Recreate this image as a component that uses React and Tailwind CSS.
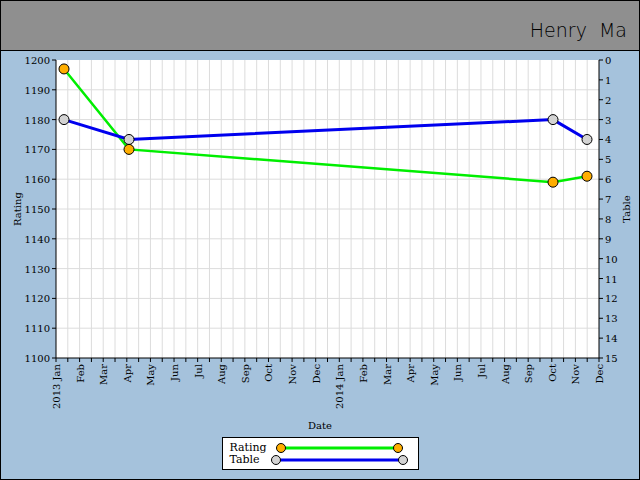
export default function App() {
  const X0 = 56, X1 = 599, Y0 = 60, Y1 = 358;
  const mx = (m) => X0 + (m * (X1 - X0)) / 23;
  const ry = (r) => Y0 + ((1200 - r) * (Y1 - Y0)) / 100;
  const ty = (t) => Y0 + (t * (Y1 - Y0)) / 15;
  const months = ["Jan","Feb","Mar","Apr","May","Jun","Jul","Aug","Sep","Oct","Nov","Dec"];
  const labels = [];
  for (let i = 0; i < 24; i++) labels.push((i === 0 ? "2013 " : i === 12 ? "2014 " : "") + months[i % 12]);
  const vgrid = [];
  for (let i = 1; i < 46; i++) vgrid.push(X0 + (i * (X1 - X0)) / 46);
  const rating = [[64, 1197], [129, 1170], [553, 1159], [587, 1161]];
  const table = [[64, 3], [129, 4], [553, 3], [587, 4]];
  const font = { fontFamily: '"DejaVu Serif", serif', fontSize: 10 };
  return (
    <div className="w-[640px] h-[480px] flex flex-col border border-black bg-[#a5c2dc] overflow-hidden">
      <div className="h-[50px] shrink-0 bg-[#8f8f8f] border-b border-black flex items-end justify-end pr-[12px] pb-[6px]">
        <span className="text-[19px] text-black" style={{ fontFamily: '"DejaVu Sans", sans-serif', fontWeight: 300 }}>Henry&nbsp;&nbsp;Ma</span>
      </div>
      <svg width="638" height="383" className="shrink-0" style={font}>
        <g transform="translate(-1,-51)">
          <rect x={X0} y={Y0} width={X1 - X0} height={Y1 - Y0} fill="#fff" />
          {vgrid.map((x, i) => <line key={i} x1={x} x2={x} y1={Y0} y2={Y1} stroke="#dcdcdc" />)}
          {Array.from({ length: 9 }, (_, i) => <line key={i} x1={X0} x2={X1} y1={ry(1110 + i * 10)} y2={ry(1110 + i * 10)} stroke="#dcdcdc" />)}
          <line x1={X0} x2={X0} y1={Y0} y2={Y1} stroke="#000" />
          <line x1={X1} x2={X1} y1={Y0} y2={Y1} stroke="#000" />
          <line x1={X0} x2={X1} y1={Y1} y2={Y1} stroke="#000" />
          {Array.from({ length: 11 }, (_, i) => (
            <g key={i}>
              <line x1={X0 - 4} x2={X0} y1={ry(1100 + i * 10)} y2={ry(1100 + i * 10)} stroke="#000" />
              <text x={X0 - 6} y={ry(1100 + i * 10) + 4} textAnchor="end">{1100 + i * 10}</text>
            </g>
          ))}
          {Array.from({ length: 16 }, (_, i) => (
            <g key={i}>
              <line x1={X1} x2={X1 + 4} y1={ty(i)} y2={ty(i)} stroke="#000" />
              <text x={X1 + 6} y={ty(i) + 4}>{i}</text>
            </g>
          ))}
          {vgrid.concat([X0, X1]).map((x, i) => <line key={i} x1={x} x2={x} y1={Y1} y2={Y1 + 4} stroke="#000" />)}
          {labels.map((l, i) => (
            <text key={i} transform={`translate(${mx(i) + 4},${Y1 + 6}) rotate(-90)`} textAnchor="end">{l}</text>
          ))}
          <text x={320} y={429} textAnchor="middle">Date</text>
          <text transform={`translate(21,${(Y0 + Y1) / 2}) rotate(-90)`} textAnchor="middle">Rating</text>
          <text transform={`translate(630,${(Y0 + Y1) / 2}) rotate(-90)`} textAnchor="middle">Table</text>
          <polyline points={rating.map(([x, r]) => `${x},${ry(r)}`).join(" ")} fill="none" stroke="#00ee00" strokeWidth="2.5" />
          <polyline points={table.map(([x, t]) => `${x},${ty(t)}`).join(" ")} fill="none" stroke="#0000ee" strokeWidth="3" />
          {table.map(([x, t], i) => <circle key={i} cx={x} cy={ty(t)} r="5" fill="#d3d3d3" stroke="#000" />)}
          {rating.map(([x, r], i) => <circle key={i} cx={x} cy={ry(r)} r="5" fill="#ffae00" stroke="#000" />)}
        </g>
      </svg>
      <div className="flex justify-center mt-[3px]">
        <div className="w-[197px] h-[33px] bg-white border border-black flex flex-col justify-center pl-[7px] text-[11px] leading-[12px]" style={{ fontFamily: '"DejaVu Serif", serif' }}>
          <div className="flex items-center gap-[6px]">
            <span className="w-[38px]">Rating</span>
            <svg width="130" height="12"><line x1="7" x2="124" y1="6" y2="6" stroke="#00ee00" strokeWidth="3" /><circle cx="7" cy="6" r="4.5" fill="#ffae00" stroke="#000" /><circle cx="124" cy="6" r="4.5" fill="#ffae00" stroke="#000" /></svg>
          </div>
          <div className="flex items-center gap-[1px]">
            <span className="w-[38px]">Table</span>
            <svg width="140" height="12"><line x1="7" x2="134" y1="6" y2="6" stroke="#0000ee" strokeWidth="3" /><circle cx="7" cy="6" r="4.5" fill="#d3d3d3" stroke="#000" /><circle cx="134" cy="6" r="4.5" fill="#d3d3d3" stroke="#000" /></svg>
          </div>
        </div>
      </div>
    </div>
  );
}
